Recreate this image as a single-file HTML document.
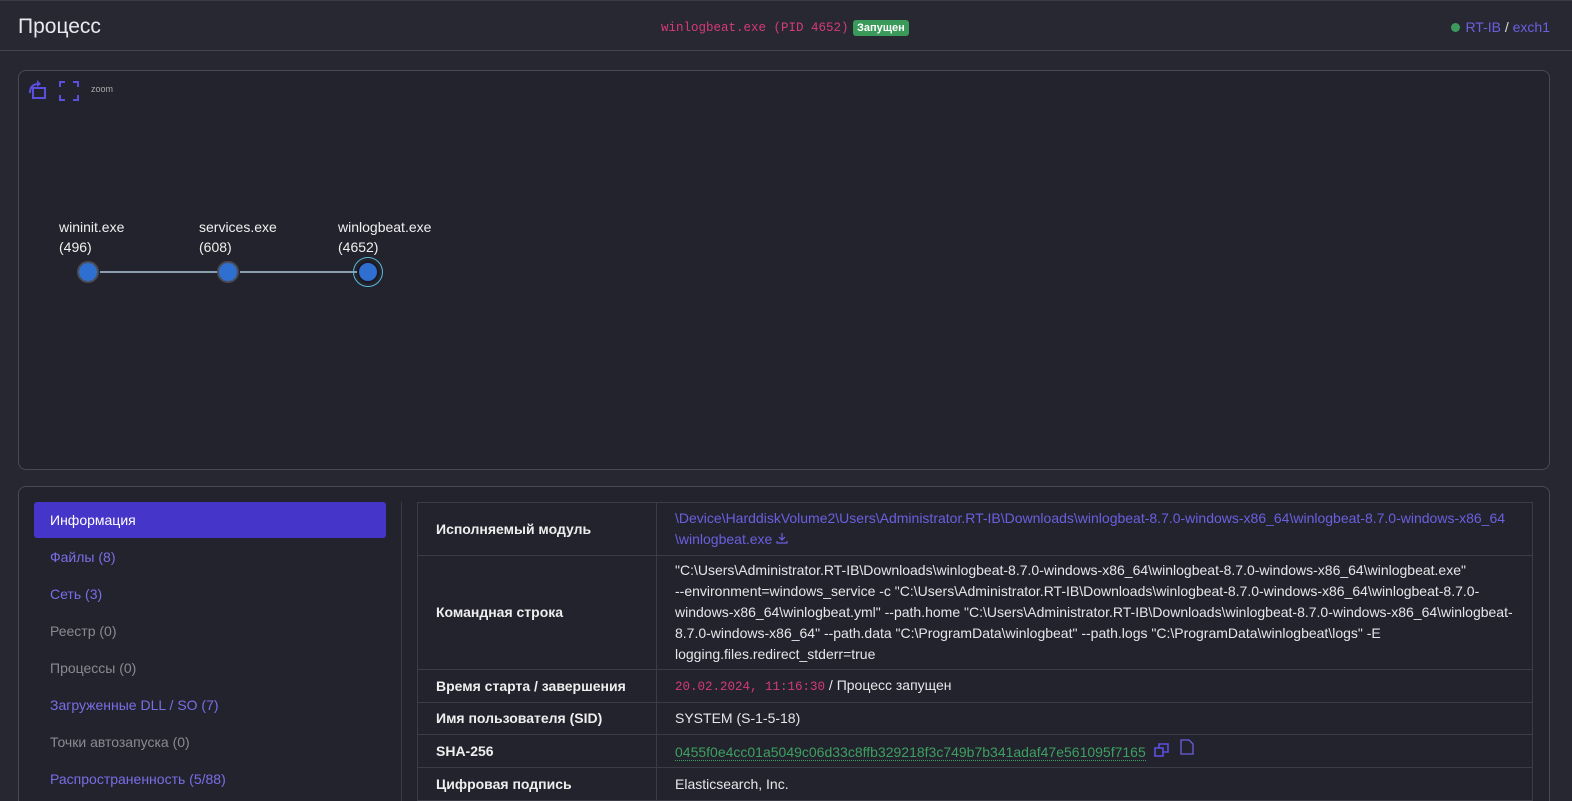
<!DOCTYPE html>
<html><head><meta charset="utf-8"><style>
*{box-sizing:border-box;margin:0;padding:0}
html,body{width:1572px;height:801px;overflow:hidden}
body{background:#272731;font-family:"Liberation Sans",sans-serif;color:#e6e6ea;position:relative}
.hdr{position:absolute;left:0;top:0;width:1572px;height:51px;border-top:1px solid #3a3a44;border-bottom:1px solid #45454f;background:#282833}
.title{position:absolute;left:18px;top:14px;font-size:21px;color:#e8e8ee}
.mid{position:absolute;left:661px;top:20px;font-family:"Liberation Mono",monospace;font-size:12.5px;color:#d63a7a}
.badge{position:absolute;left:853px;top:19px;background:#3a9a5a;color:#fff;font-size:11px;font-weight:bold;padding:1px 4px;border-radius:3px;height:16px;line-height:14px}
.rt{position:absolute;right:22px;top:18px;font-size:14px;color:#6b5fe0}
.rt .d{display:inline-block;width:9px;height:9px;border-radius:50%;background:#3d9a5e;margin-right:5px}
.panel{position:absolute;border:1px solid #4a4a55;border-radius:8px;background:#23232d}
.lbl{position:absolute;font-size:14px;color:#f0f0f0;line-height:20px}
.node{position:absolute;width:22px;height:22px;border-radius:50%;background:#2f6fd0;border:2px solid #4a4d58}
.line{position:absolute;height:2px;background:#8aa0b0;top:271px}
.side div{position:absolute;left:34px;width:352px;height:36px;line-height:36px;padding-left:16px;font-size:14px}
table{position:absolute;left:417px;top:502px;width:1116px;border-collapse:collapse;font-size:14px}
td{border:1px solid #3c3c47;padding:0 18px;line-height:21px;vertical-align:middle}
td.k{width:239px;font-weight:bold;color:#eee}
td.v{color:#e6e6ea;padding-left:18px}
td.v.lk{color:#6b5fe0}
</style></head><body>
<div class="hdr">
<div class="title">Процесс</div>
<div class="mid">winlogbeat.exe (PID 4652)</div>
<div class="badge">Запущен</div>
<div class="rt"><span class="d"></span>RT-IB <span style="color:#ddd">/</span> exch1</div>
</div>
<div class="panel" style="left:18px;top:70px;width:1532px;height:400px">
<svg style="position:absolute;left:8px;top:8px" width="24" height="22" viewBox="0 0 24 22"><rect x="6" y="9" width="12" height="10" fill="none" stroke="#5b4fe0" stroke-width="2"/><path d="M2 14 Q2 5 10 4 L10 1 L14 5 L10 8 L10 6 Q4 7 4 14" fill="#5b4fe0"/></svg>
<svg style="position:absolute;left:40px;top:10px" width="20" height="20" viewBox="0 0 20 20" fill="none" stroke="#5b4fe0" stroke-width="2"><path d="M1 6V1H6M14 1H19V6M19 14V19H14M6 19H1V14"/></svg>
<div style="position:absolute;left:72px;top:13px;font-size:9px;color:#aaa">zoom</div>
</div>
<div class="lbl" style="left:59px;top:217px">wininit.exe<br>(496)</div>
<div class="lbl" style="left:199px;top:217px">services.exe<br>(608)</div>
<div class="lbl" style="left:338px;top:217px">winlogbeat.exe<br>(4652)</div>
<div class="line" style="left:100px;width:118px"></div>
<div class="line" style="left:240px;width:118px"></div>
<div class="node" style="left:77px;top:261px"></div>
<div class="node" style="left:217px;top:261px"></div>
<div style="position:absolute;left:353px;top:257px;width:30px;height:30px;border-radius:50%;border:1px solid #5ab8d8"></div>
<div class="node" style="left:357px;top:261px;border-color:#1a1a22"></div>
<div class="panel" style="left:18px;top:486px;width:1532px;height:340px"></div>
<div style="position:absolute;left:401px;top:502px;width:1px;height:299px;background:#3a3a44"></div>
<div class="side">
<div style="top:502px;background:#4535c8;color:#fff;border-radius:3px">Информация</div>
<div style="top:539px;color:#7a6ee6">Файлы (8)</div>
<div style="top:576px;color:#7a6ee6">Сеть (3)</div>
<div style="top:613px;color:#8a8a92">Реестр (0)</div>
<div style="top:650px;color:#8a8a92">Процессы (0)</div>
<div style="top:687px;color:#7a6ee6">Загруженные DLL / SO (7)</div>
<div style="top:724px;color:#8a8a92">Точки автозапуска (0)</div>
<div style="top:761px;color:#7a6ee6">Распространенность (5/88)</div>
</div>
<table>
<tr style="height:53px"><td class="k">Исполняемый модуль</td><td class="v lk">\Device\HarddiskVolume2\Users\Administrator.RT-IB\Downloads\winlogbeat-8.7.0-windows-x86_64\winlogbeat-8.7.0-windows-x86_64<br>\winlogbeat.exe <svg width="12" height="12" viewBox="0 0 12 12" fill="none" stroke="#6b5fe0" stroke-width="1.2"><path d="M6 1V8M3 5L6 8L9 5M1 9V11H11V9"/></svg></td></tr>
<tr style="height:114px"><td class="k">Командная строка</td><td class="v">"C:\Users\Administrator.RT-IB\Downloads\winlogbeat-8.7.0-windows-x86_64\winlogbeat-8.7.0-windows-x86_64\winlogbeat.exe"<br>--environment=windows_service -c "C:\Users\Administrator.RT-IB\Downloads\winlogbeat-8.7.0-windows-x86_64\winlogbeat-8.7.0-<br>windows-x86_64\winlogbeat.yml" --path.home "C:\Users\Administrator.RT-IB\Downloads\winlogbeat-8.7.0-windows-x86_64\winlogbeat-<br>8.7.0-windows-x86_64" --path.data "C:\ProgramData\winlogbeat" --path.logs "C:\ProgramData\winlogbeat\logs" -E<br>logging.files.redirect_stderr=true</td></tr>
<tr style="height:33px"><td class="k">Время старта / завершения</td><td class="v"><span style="font-family:'Liberation Mono',monospace;font-size:12.5px;color:#d63a7a">20.02.2024, 11:16:30</span> / Процесс запущен</td></tr>
<tr style="height:32px"><td class="k">Имя пользователя (SID)</td><td class="v">SYSTEM (S-1-5-18)</td></tr>
<tr style="height:33px"><td class="k">SHA-256</td><td class="v"><span style="color:#3da060;border-bottom:1px dotted #3da060">0455f0e4cc01a5049c06d33c8ffb329218f3c749b7b341adaf47e561095f7165</span>
<svg width="16" height="14" viewBox="0 0 16 14" fill="none" stroke="#5b4fe0" stroke-width="1.6" style="margin-left:4px"><rect x="1" y="5" width="8" height="8"/><path d="M5 5V1H14V9H9"/></svg>
<svg width="14" height="16" viewBox="0 0 14 16" fill="none" stroke="#6b5fe0" stroke-width="1.3" style="margin-left:6px;vertical-align:2px"><path d="M1 1H9L13 5V15H1Z"/></svg></td></tr>
<tr style="height:33px"><td class="k">Цифровая подпись</td><td class="v">Elasticsearch, Inc.</td></tr>
</table>
</body></html>
